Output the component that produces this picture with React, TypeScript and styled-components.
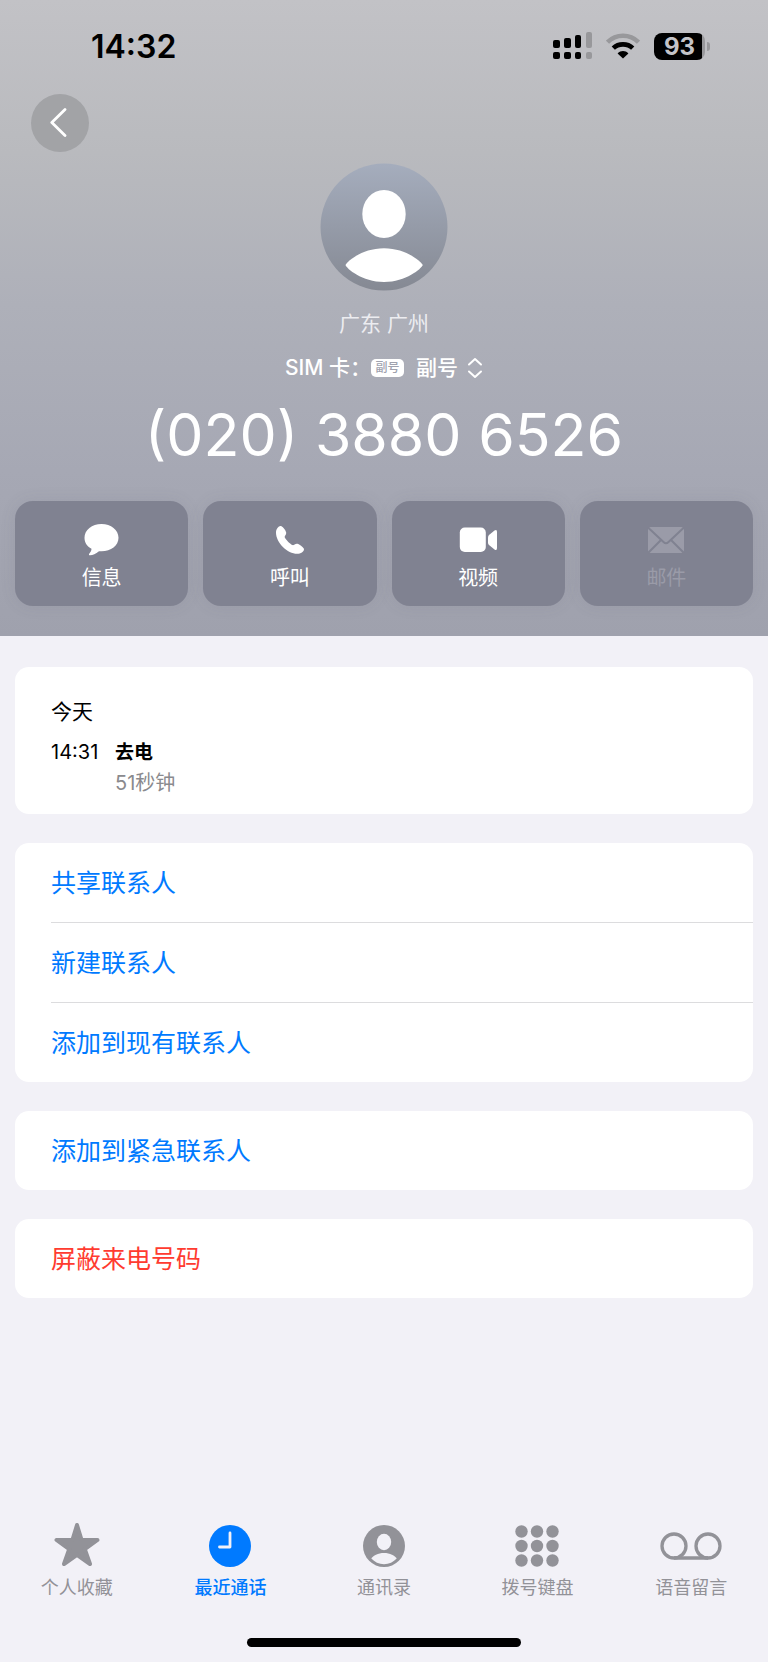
import React from "react";
import styled, { createGlobalStyle, css } from "styled-components";

const GlobalStyle = createGlobalStyle`
  * { box-sizing: border-box; }
  body {
    margin: 0;
    background: #f2f1f7;
    font-family: Inter, "Noto Sans CJK SC", sans-serif;
    -webkit-font-smoothing: antialiased;
  }
  button, select { font-family: inherit; margin: 0; }
`;

const Page = styled.div`
  display: flex;
  flex-direction: column;
  min-height: 100vh;
`;

const Hero = styled.header`
  display: flex;
  flex-direction: column;
  padding-bottom: 30px;
  background: linear-gradient(180deg, #c2c2c6 0%, #b9babe 24%, #aeb0b9 48%, #a6a8b4 74%, #9fa1ad 100%);
`;

const StatusBar = styled.div`
  display: flex;
  justify-content: space-between;
  align-items: center;
  height: 94px;
  padding: 0 58px 2px 91px;
`;

const Clock = styled.time`
  padding-top: 2px;
  font-size: 32px;
  line-height: 40px;
  font-weight: 600;
  color: #000;
`;

const Indicators = styled.div`
  display: flex;
  align-items: center;
  gap: 14px;
`;

const Battery = styled.div`
  display: flex;
  align-items: center;
  gap: 2px;
`;

const BatteryBody = styled.div`
  width: 51px;
  height: 27px;
  border-radius: 8px;
  background: linear-gradient(90deg, #000 94%, #98989b 94%);
  color: #c4c4c8;
  font-size: 24px;
  line-height: 27px;
  font-weight: 700;
  text-align: center;
`;

const BatteryTip = styled.div`
  width: 3px;
  height: 9px;
  border-radius: 0 4px 4px 0;
  background: #98989b;
`;

const BackButton = styled.button`
  display: flex;
  align-items: center;
  justify-content: center;
  width: 58px;
  height: 58px;
  margin-left: 31px;
  padding: 0;
  border: 0;
  border-radius: 50%;
  background: #a2a3a6;
`;

const Profile = styled.section`
  display: flex;
  flex-direction: column;
  align-items: center;
  padding-top: 11px;
`;

const Region = styled.p`
  margin: 18px 0 0;
  font-size: 21px;
  line-height: 30px;
  color: #ececf0;
`;

const SimRow = styled.div`
  display: flex;
  align-items: center;
  margin-top: 13px;
  font-size: 21px;
  line-height: 32px;
  font-weight: 500;
  color: #fff;
`;

const SimBadge = styled.span`
  width: 33px;
  height: 18px;
  margin-right: 12px;
  border-radius: 5px;
  background: #fff;
  color: #a0a2ae;
  font-size: 12px;
  line-height: 18px;
  text-align: center;
`;

const SimSelect = styled.select`
  appearance: none;
  padding: 0;
  border: 0;
  background: none;
  color: #fff;
  font-size: 21px;
  line-height: 32px;
  font-weight: 500;
  margin-right: 9px;
`;

const PhoneNumber = styled.h1`
  margin: 13px 0 0;
  font-size: 59px;
  line-height: 76px;
  font-weight: 400;
  color: #fff;
  white-space: nowrap;
`;

const Actions = styled.div`
  display: grid;
  grid-template-columns: repeat(4, 1fr);
  gap: 15px;
  margin-top: 28px;
  padding: 0 15px;
`;

const ActionButton = styled.button`
  display: flex;
  flex-direction: column;
  align-items: center;
  height: 105px;
  padding: 22px 0 0;
  border: 0;
  border-radius: 18px;
  background: #808291;
  box-shadow: 0 0 16px rgba(90, 92, 110, 0.1);
  color: #fff;
  font-size: 20px;
  line-height: 28px;
  &:disabled { color: #9a9ba8; }
  svg { margin-bottom: 7px; }
`;

const Content = styled.main`
  flex: 1;
  display: flex;
  flex-direction: column;
  gap: 29px;
  padding: 31px 15px;
`;

const Card = styled.section`
  overflow: hidden;
  border-radius: 14px;
  background: #fff;
`;

const CallLog = styled(Card)`
  padding: 29px 36px 15px;
  color: #000;
`;

const Day = styled.h2`
  margin: 0 0 9px;
  font-size: 21px;
  line-height: 32px;
  font-weight: 400;
`;

const CallGrid = styled.div`
  display: grid;
  grid-template-columns: 50px 1fr;
  column-gap: 14px;
  font-size: 20px;
  line-height: 31px;
`;

const CallKind = styled.span`
  font-size: 19px;
  font-weight: 700;
`;

const CallLength = styled.span`
  grid-column: 2;
  color: #8a8a8e;
`;

const ListButton = styled.button<{ $danger?: boolean }>`
  display: block;
  width: calc(100% - 36px);
  height: 79px;
  margin-left: 36px;
  padding: 0;
  border: 0;
  background: none;
  color: ${(p) => (p.$danger ? "#ff3b30" : "#007aff")};
  font-size: 25px;
  line-height: 36px;
  text-align: left;
  & + & {
    height: 80px;
    border-top: 1px solid #dcdcde;
  }
`;

const TabBar = styled.nav`
  display: flex;
`;

const Tab = styled.a<{ $active?: boolean }>`
  flex: 1;
  display: flex;
  flex-direction: column;
  align-items: center;
  color: #929298;
  font-size: 18px;
  line-height: 28px;
  text-decoration: none;
  ${(p) => p.$active && css`
    color: #007aff;
    font-weight: 500;
  `}
  svg { margin-bottom: 6px; }
`;

const HomeIndicator = styled.div`
  width: 274px;
  height: 9px;
  margin: 36px auto 15px;
  border-radius: 5px;
  background: #000;
`;

const Signal = () => (
  <svg width="39" height="28" viewBox="0 0 39 28" aria-hidden="true">
    <g fill="#000">
      <rect x="0" y="8" width="7" height="8" rx="2" />
      <rect x="11" y="6" width="7" height="10" rx="2" />
      <rect x="22" y="3" width="6" height="13" rx="2" />
      <rect x="0" y="20" width="7" height="7" rx="2" />
      <rect x="11" y="20" width="7" height="7" rx="2" />
      <rect x="22" y="20" width="6" height="7" rx="2" />
    </g>
    <g fill="#98989b">
      <rect x="33" y="0" width="6" height="16" rx="2" />
      <rect x="33" y="20" width="6" height="7" rx="2" />
    </g>
  </svg>
);

const Wifi = () => (
  <svg width="34" height="26" viewBox="0 0 34 26" aria-hidden="true">
    <g fill="none" strokeWidth="4.6">
      <path d="M1.5 9.2 C10 .6 24 .6 32.5 9.2" stroke="#98989b" />
      <path d="M7.3 15.2 C12.5 10.1 21.5 10.1 26.7 15.2" stroke="#000" />
    </g>
    <path d="M17 25.5 L11.6 20.5 C14.8 17.3 19.2 17.3 22.4 20.5 Z" fill="#000" />
  </svg>
);

const AvatarArt = () => (
  <svg width="128" height="128" viewBox="0 0 128 128" aria-hidden="true">
    <defs>
      <linearGradient id="avatarShade" x1="0" y1="0" x2="0" y2="1">
        <stop offset="0" stopColor="#a5adbd" />
        <stop offset="1" stopColor="#858993" />
      </linearGradient>
    </defs>
    <circle cx="64" cy="64" r="63.5" fill="url(#avatarShade)" />
    <ellipse cx="64" cy="51" rx="21.7" ry="24" fill="#fff" />
    <path d="M25.5 102 C27 98.5 42 85.3 64 85.3 S101 98.500 102.8 102 C101.5 105.5 86 119 64 119 S26.5 105.5 25.5 102 Z" fill="#fff" />
  </svg>
);

const MessageIcon = () => (
  <svg width="36" height="34" viewBox="0 0 36 34" aria-hidden="true">
    <path fill="currentColor" d="M17.500 1 C27 1 34.500 7 34.500 14.800 S27 28.300 17.500 28.300 C16.500 28.300 15.700 28.300 15 28.200 C11.500 30.700 9 32.300 6 32.300 C4.800 32.300 4.700 31.300 5.400 30.500 C6.700 29 7.500 27.500 7.500 25.800 C3 23.500 .5 19.500 .5 14.800 C.5 7 8 1 17.500 1 Z" />
  </svg>
);

const PhoneIcon = () => (
  <svg width="30" height="34" viewBox="0 0 30 34" aria-hidden="true">
    <path fill="currentColor" d="M6.500 3.300 C4.500 1.900 1 5.300 1 9.700 C1 19.500 12.500 30.800 22.200 30.800 C26.500 30.800 30.200 27.500 28.600 25.300 C27.400 23.600 24.800 21.800 23.200 21.100 C20.300 19.900 19 22.900 17.300 22.100 C14.700 20.700 11.100 17.100 9.800 14.600 C9 12.900 12 11.700 11 8.900 C10.300 6.900 8.300 4.400 6.500 3.300 Z" />
  </svg>
);

const VideoIcon = () => (
  <svg width="38" height="34" viewBox="0 0 38 34" aria-hidden="true">
    <g fill="currentColor">
      <rect x="0.800" y="4.500" width="26" height="24.500" rx="5" />
      <path d="M29 14.500 Q29 13 30 12 L35.500 7.600 Q38 6.100 38 9 V25 Q38 27.900 35.500 26.400 L30 22 Q29 21 29 19.500 Z" />
    </g>
  </svg>
);

const MailIcon = () => (
  <svg width="38" height="34" viewBox="0 0 38 34" aria-hidden="true">
    <rect x="1" y="4" width="36" height="26" rx="3" fill="currentColor" />
    <g fill="none" stroke="#808291" strokeWidth="2">
      <path d="M1 4.500 L16.500 19 Q19 21.500 21.500 19 L37 4.500" />
      <path d="M1 30 L14 17 M37 30 L24 17" />
    </g>
  </svg>
);

const StarIcon = () => (
  <svg width="48" height="46" viewBox="0 0 48 46" aria-hidden="true">
    <path fill="currentColor" stroke="currentColor" strokeWidth="4" strokeLinejoin="round" d="M24 3 L28.600 18 H44.500 L31.800 27.200 L37 42 L24 32.800 L11 42 L16.200 27.200 L3.500 18 H19.400 Z" />
  </svg>
);

const RecentIcon = () => (
  <svg width="48" height="46" viewBox="0 0 48 46" aria-hidden="true">
    <circle cx="24" cy="24" r="21" fill="currentColor" />
    <path d="M24 11 V25 H13.500" fill="none" stroke="#f2f1f7" strokeWidth="2.800" strokeLinecap="round" strokeLinejoin="round" />
  </svg>
);

const ContactIcon = () => (
  <svg width="48" height="46" viewBox="0 0 48 46" aria-hidden="true">
    <circle cx="24" cy="24" r="21" fill="currentColor" />
    <ellipse cx="24" cy="20" rx="7.200" ry="8.200" fill="#f2f1f7" />
    <path d="M11.300 36.500 C13 33.500 18 31 24 31 S35 33.500 36.700 36.500 C33.500 40 29 42.200 24 42.200 S14.500 40 11.300 36.500 Z" fill="#f2f1f7" />
  </svg>
);

const KeypadIcon = () => (
  <svg width="48" height="46" viewBox="0 0 48 46" aria-hidden="true">
    {[9.5, 24, 38.5].map((y) =>
      [7.5, 23, 38.5].map((x) => <circle key={`${x}-${y}`} cx={x} cy={y} r="6.200" fill="currentColor" />)
    )}
  </svg>
);

const VoicemailIcon = () => (
  <svg width="64" height="46" viewBox="0 0 64 46" aria-hidden="true">
    <g fill="none" stroke="currentColor" strokeWidth="3.300">
      <circle cx="15" cy="24" r="12" />
      <circle cx="49" cy="24" r="12" />
      <path d="M15 36 H49" />
    </g>
  </svg>
);

const actions = [
  { label: "信息", Icon: MessageIcon },
  { label: "呼叫", Icon: PhoneIcon },
  { label: "视频", Icon: VideoIcon },
  { label: "邮件", Icon: MailIcon, disabled: true },
];

const tabs = [
  { label: "个人收藏", Icon: StarIcon },
  { label: "最近通话", Icon: RecentIcon, active: true },
  { label: "通讯录", Icon: ContactIcon },
  { label: "拨号键盘", Icon: KeypadIcon },
  { label: "语音留言", Icon: VoicemailIcon },
];

export default function App() {
  return (
    <Page>
      <GlobalStyle />
      <Hero>
        <StatusBar>
          <Clock>14:32</Clock>
          <Indicators>
            <Signal />
            <Wifi />
            <Battery>
              <BatteryBody>93</BatteryBody>
              <BatteryTip />
            </Battery>
          </Indicators>
        </StatusBar>
        <BackButton aria-label="返回">
          <svg width="20" height="30" viewBox="0 0 20 30" aria-hidden="true">
            <path d="M15 1.500 L1.800 14.500 L15 27.500" fill="none" stroke="#fff" strokeWidth="2.800" strokeLinecap="round" strokeLinejoin="round" />
          </svg>
        </BackButton>
        <Profile>
          <AvatarArt />
          <Region>广东 广州</Region>
          <SimRow>
            <label htmlFor="sim">SIM 卡：</label>
            <SimBadge>副号</SimBadge>
            <SimSelect id="sim">
              <option>副号</option>
            </SimSelect>
            <svg width="16" height="22" viewBox="0 0 16 22" aria-hidden="true">
              <path d="M2 7.500 L8 2 L14 7.500 M2 14.500 L8 20 L14 14.500" fill="none" stroke="#fff" strokeWidth="2" strokeLinecap="round" strokeLinejoin="round" />
            </svg>
          </SimRow>
          <PhoneNumber>(020) 3880 6526</PhoneNumber>
        </Profile>
        <Actions>
          {actions.map(({ label, Icon, disabled }) => (
            <ActionButton key={label} disabled={disabled}>
              <Icon />
              {label}
            </ActionButton>
          ))}
        </Actions>
      </Hero>
      <Content>
        <CallLog>
          <Day>今天</Day>
          <CallGrid>
            <time>14:31</time>
            <CallKind>去电</CallKind>
            <CallLength>51秒钟</CallLength>
          </CallGrid>
        </CallLog>
        <Card>
          <ListButton>共享联系人</ListButton>
          <ListButton>新建联系人</ListButton>
          <ListButton>添加到现有联系人</ListButton>
        </Card>
        <Card>
          <ListButton>添加到紧急联系人</ListButton>
        </Card>
        <Card>
          <ListButton $danger>屏蔽来电号码</ListButton>
        </Card>
      </Content>
      <TabBar>
        {tabs.map(({ label, Icon, active }) => (
          <Tab key={label} href="#" $active={active} aria-current={active ? "page" : undefined}>
            <Icon />
            {label}
          </Tab>
        ))}
      </TabBar>
      <HomeIndicator />
    </Page>
  );
}
